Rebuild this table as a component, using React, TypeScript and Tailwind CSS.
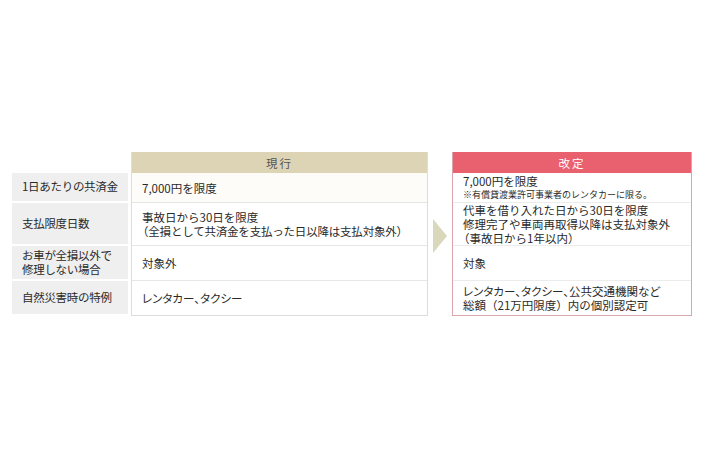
const font = { fontFamily: '"Noto Sans CJK JP", "Noto Sans", sans-serif' };

const labels = ['1日あたりの共済金', '支払限度日数', 'お車が全損以外で\n修理しない場合', '自然災害時の特例'];
const rowH = ['h-[30px]', 'h-[43px]', 'h-[35px]', 'h-[35px]'];

export default function App() {
  return (
    <div
      className="w-[710px] h-[474px] bg-white flex items-start pt-[152px] pl-[12px] text-[#2a2a2a] text-[11.5px] leading-[14px] whitespace-nowrap"
      style={font}
    >
      {/* Label column */}
      <div className="w-[116px] flex flex-col">
        <div className="h-[21px]" />
        {labels.map((l, i) => (
          <div
            key={i}
            className={`${rowH[i]} flex items-center pl-[10px] pr-[4px] bg-[#efefef] border-b-2 border-white whitespace-pre-line tracking-[-0.3px] leading-[13.5px]`}
          >
            {l}
          </div>
        ))}
      </div>

      {/* Current */}
      <div className="ml-[3px] w-[297px] flex flex-col border border-[#dcdcdc] border-t-0">
        <div className="h-[21px] bg-[#ddd4b6] flex items-center justify-center tracking-[2px] text-[#555]">
          現行
        </div>
        <div className="h-[30px] flex items-center px-[10px] border-b border-[#e6e6e6] bg-[#fdfcf8]">
          7,000円を限度
        </div>
        <div className="h-[43px] flex flex-col justify-center px-[10px] border-b border-[#e6e6e6]">
          <span>事故日から30日を限度</span>
          <span className="-ml-[5px] tracking-[-0.2px]">（全損として共済金を支払った日以降は支払対象外）</span>
        </div>
        <div className="h-[35px] flex items-center px-[10px] border-b border-[#e6e6e6]">対象外</div>
        <div className="h-[34px] flex items-center px-[10px] [font-feature-settings:'palt']">レンタカー、タクシー</div>
      </div>

      {/* Arrow */}
      <div className="w-[24px] h-[164px] flex items-center justify-center">
        <svg width="14" height="34" viewBox="0 0 14 34" className="mb-[-4px]">
          <polygon points="0,0 14,17 0,34" fill="#dad8bb" />
        </svg>
      </div>

      {/* Revised */}
      <div className="w-[240px] flex flex-col border border-[#dca5ad] border-t-0">
        <div className="h-[21px] bg-[#e9606f] flex items-center justify-center tracking-[2px] text-white">
          改定
        </div>
        <div className="h-[30px] flex flex-col justify-center px-[10px] border-b border-[#ececec]">
          <span className="leading-[14px]">7,000円を限度</span>
          <span className="text-[9px] leading-[13px]">※有償貸渡業許可事業者のレンタカーに限る。</span>
        </div>
        <div className="h-[43px] flex flex-col justify-center px-[10px] border-b border-[#ececec]">
          <span>代車を借り入れた日から30日を限度</span>
          <span>修理完了や車両再取得以降は支払対象外</span>
          <span className="-ml-[5px]">（事故日から1年以内）</span>
        </div>
        <div className="h-[35px] flex items-center px-[10px] border-b border-[#ececec]">対象</div>
        <div className="h-[34px] flex flex-col justify-center px-[10px]">
          <span className="[font-feature-settings:'palt']">レンタカー、タクシー、公共交通機関など</span>
          <span className="-mr-[4px]">総額（21万円限度）内の個別認定可</span>
        </div>
      </div>
    </div>
  );
}
